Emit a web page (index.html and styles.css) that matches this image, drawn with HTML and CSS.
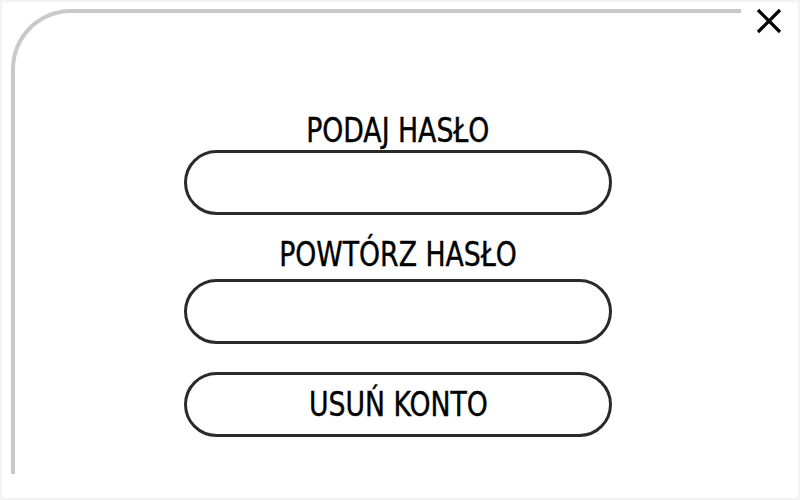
FILE: index.html
```
<!DOCTYPE html>
<html lang="pl">
<head>
<meta charset="utf-8">
<title>Usuń konto</title>
<link rel="stylesheet" href="styles.css">
</head>
<body>
<div class="panel">
  <div class="frame"></div>
  <button class="close" aria-label="Zamknij">
    <svg width="26" height="26" viewBox="0 0 26 26"><path d="M2 2 L24 24 M24 2 L2 24" stroke="#000" stroke-width="3.2" fill="none"/></svg>
  </button>
  <form class="form">
    <label class="label label-first"><span class="txt">PODAJ HASŁO</span></label>
    <input class="field field-first" type="password">
    <label class="label label-second"><span class="txt">POWTÓRZ HASŁO</span></label>
    <input class="field field-second" type="password">
    <button class="field action" type="button"><span class="txt">USUŃ KONTO</span></button>
  </form>
</div>
</body>
</html>
```
FILE: styles.css
```
html, body {
  margin: 0;
  padding: 0;
  background: #f3f3f3;
}
.panel {
  position: relative;
  margin: 2px;
  height: 496px;
  background: #ffffff;
  box-sizing: border-box;
  padding-top: 113px;
}
.frame {
  position: absolute;
  left: 9px;
  top: 7px;
  width: 730px;
  height: 465px;
  box-sizing: border-box;
  border-top: 4px solid #c9c9c9;
  border-left: 4px solid #c9c9c9;
  border-top-left-radius: 60px;
}
.close {
  position: absolute;
  left: 754px;
  top: 6px;
  width: 26px;
  height: 26px;
  padding: 0;
  border: 0;
  background: transparent;
  display: block;
}
.close svg { display: block; }
.form {
  width: 428px;
  margin-left: 182px;
  display: flex;
  flex-direction: column;
  font-family: "DejaVu Sans", sans-serif;
  font-stretch: condensed;
}
.txt {
  display: inline-block;
  transform: scaleX(0.9);
  transform-origin: center;
  -webkit-text-stroke: 0.4px #000;
}
.label {
  display: block;
  text-align: center;
  font-size: 33px;
  line-height: 32px;
  height: 32px;
  color: #000;
}
.label-second {
  margin-top: 24px;
}
.field {
  display: block;
  box-sizing: border-box;
  width: 428px;
  height: 65px;
  border: 3px solid #2a2a2a;
  border-radius: 33px;
  background: #fff;
  font-family: inherit;
  outline: none;
}
.field-first { margin-top: 3px; }
.field-second { margin-top: 8px; }
.action {
  margin-top: 28px;
  font-size: 33px;
  font-stretch: condensed;
  color: #000;
  padding: 0;
  line-height: 59px;
  text-align: center;
}
```
